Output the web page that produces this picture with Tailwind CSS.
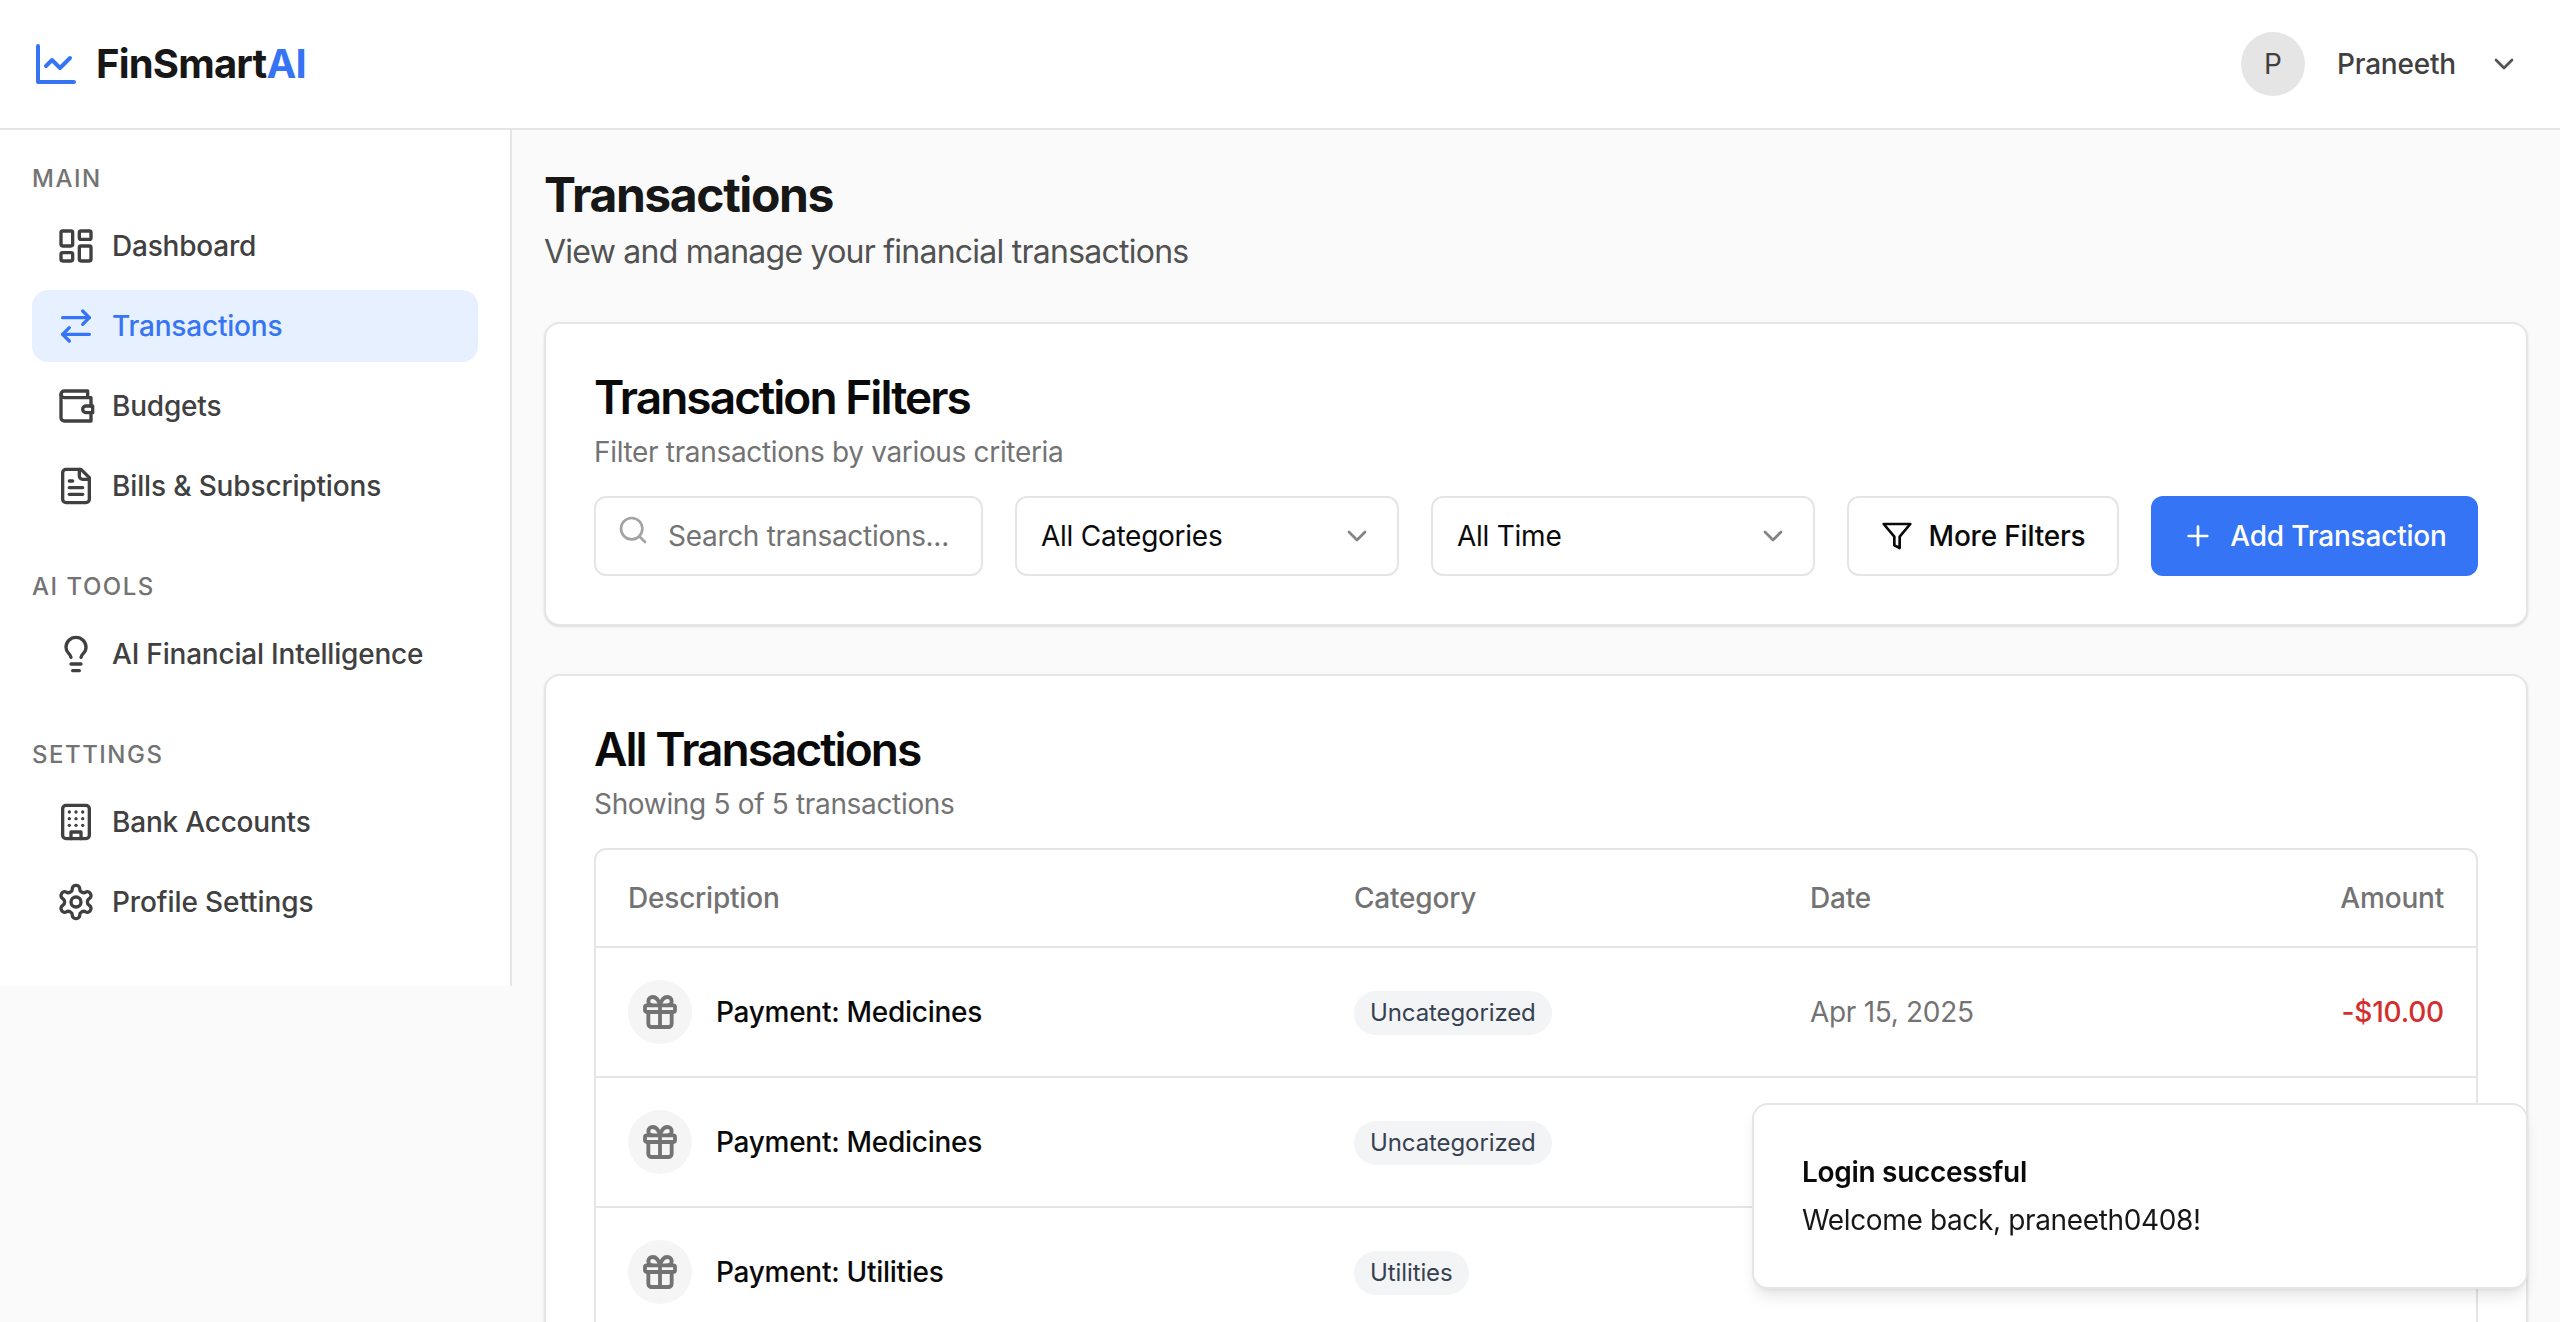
<!DOCTYPE html>
<html lang="en">
<head>
<meta charset="UTF-8">
<title>FinSmartAI - Transactions</title>
<script src="https://cdn.jsdelivr.net/npm/@tailwindcss/browser@4"></script>
</head>
<body class="h-screen overflow-hidden bg-[#fafafa] font-['Inter',sans-serif] text-[#0a0a0a] antialiased">

<!-- Header -->
<header class="h-[130px] bg-white border-b-2 border-[#e5e5e5] flex items-center justify-between pl-8 pr-10">
  <div class="flex items-center gap-4">
    <svg class="w-12 h-12 text-[#3574f5]" viewBox="0 0 24 24" fill="none" stroke="currentColor" stroke-width="2" stroke-linecap="round" stroke-linejoin="round"><path d="M3 3v18h18"/><path d="m19 9-5 5-4-4-3 3"/></svg>
    <span class="text-[40px] leading-[50px] font-bold tracking-[-0.8px] text-[#171717]">FinSmart<span class="text-[#3574f5]">AI</span></span>
  </div>
  <div class="flex items-center">
    <div class="w-16 h-16 rounded-full bg-[#e5e5e5] flex items-center justify-center text-[28px] text-[#404040]">P</div>
    <span class="ml-8 text-[28px] font-[450] tracking-[-0.2px] text-[#404040]">Praneeth</span>
    <svg class="ml-8 w-8 h-8 text-[#525252]" viewBox="0 0 24 24" fill="none" stroke="currentColor" stroke-width="2" stroke-linecap="round" stroke-linejoin="round"><path d="m6 9 6 6 6-6"/></svg>
  </div>
</header>

<div class="flex items-start">
  <!-- Sidebar -->
  <aside class="w-[512px] shrink-0 bg-white border-r-2 border-[#e5e5e5] pl-8 pr-8 pt-8 pb-12">
    <div class="h-8 text-[24px] leading-[34px] font-medium tracking-[1.5px] text-[#737373] mb-4">MAIN</div>
    <nav class="flex flex-col gap-2 mb-12">
      <a class="h-[72px] rounded-2xl pl-6 flex items-center gap-4 text-[28px] font-[450] tracking-[-0.2px] text-[#404040]">
        <svg class="w-10 h-10" viewBox="0 0 24 24" fill="none" stroke="currentColor" stroke-width="2" stroke-linecap="round" stroke-linejoin="round"><rect width="7" height="9" x="3" y="3" rx="1"/><rect width="7" height="5" x="14" y="3" rx="1"/><rect width="7" height="9" x="14" y="12" rx="1"/><rect width="7" height="5" x="3" y="16" rx="1"/></svg>
        Dashboard
      </a>
      <a class="h-[72px] rounded-2xl pl-6 flex items-center gap-4 text-[28px] font-[450] tracking-[-0.2px] bg-[#e6f0fe] text-[#3574f5]">
        <svg class="w-10 h-10" viewBox="0 0 24 24" fill="none" stroke="currentColor" stroke-width="2" stroke-linecap="round" stroke-linejoin="round"><path d="m16 3 4 4-4 4"/><path d="M20 7H4"/><path d="m8 21-4-4 4-4"/><path d="M4 17h16"/></svg>
        Transactions
      </a>
      <a class="h-[72px] rounded-2xl pl-6 flex items-center gap-4 text-[28px] font-[450] tracking-[-0.2px] text-[#404040]">
        <svg class="w-10 h-10" viewBox="0 0 24 24" fill="none" stroke="currentColor" stroke-width="2" stroke-linecap="round" stroke-linejoin="round"><path d="M21 12V7H5a2 2 0 0 1 0-4h14v4"/><path d="M3 5v14a2 2 0 0 0 2 2h16v-5"/><path d="M18 12a2 2 0 0 0 0 4h4v-4Z"/></svg>
        Budgets
      </a>
      <a class="h-[72px] rounded-2xl pl-6 flex items-center gap-4 text-[28px] font-[450] tracking-[-0.15px] text-[#404040]">
        <svg class="w-10 h-10" viewBox="0 0 24 24" fill="none" stroke="currentColor" stroke-width="2" stroke-linecap="round" stroke-linejoin="round"><path d="M15 2H6a2 2 0 0 0-2 2v16a2 2 0 0 0 2 2h12a2 2 0 0 0 2-2V7Z"/><path d="M14 2v4a2 2 0 0 0 2 2h4"/><path d="M10 9H8"/><path d="M16 13H8"/><path d="M16 17H8"/></svg>
        Bills &amp; Subscriptions
      </a>
    </nav>

    <div class="h-8 text-[24px] leading-[34px] font-medium tracking-[1.5px] text-[#737373] mb-4">AI TOOLS</div>
    <nav class="flex flex-col gap-2 mb-12">
      <a class="h-[72px] rounded-2xl pl-6 flex items-center gap-4 text-[28px] font-[450] tracking-[-0.2px] text-[#404040]">
        <svg class="w-10 h-10" viewBox="0 0 24 24" fill="none" stroke="currentColor" stroke-width="2" stroke-linecap="round" stroke-linejoin="round"><path d="M15 14c.2-1 .7-1.7 1.5-2.5 1-.9 1.5-2.2 1.5-3.5A6 6 0 0 0 6 8c0 1 .2 2.2 1.5 3.5.7.7 1.3 1.5 1.5 2.5"/><path d="M9 18h6"/><path d="M10 22h4"/></svg>
        AI Financial Intelligence
      </a>
    </nav>

    <div class="h-8 text-[24px] leading-[34px] font-medium tracking-[1.5px] text-[#737373] mb-4">SETTINGS</div>
    <nav class="flex flex-col gap-2">
      <a class="h-[72px] rounded-2xl pl-6 flex items-center gap-4 text-[28px] font-[450] tracking-[-0.2px] text-[#404040]">
        <svg class="w-10 h-10" viewBox="0 0 24 24" fill="none" stroke="currentColor" stroke-width="2" stroke-linecap="round" stroke-linejoin="round"><rect width="16" height="20" x="4" y="2" rx="2"/><path d="M9 22v-4h6v4"/><path d="M8 6h.01"/><path d="M16 6h.01"/><path d="M12 6h.01"/><path d="M12 10h.01"/><path d="M12 14h.01"/><path d="M16 10h.01"/><path d="M16 14h.01"/><path d="M8 10h.01"/><path d="M8 14h.01"/></svg>
        Bank Accounts
      </a>
      <a class="h-[72px] rounded-2xl pl-6 flex items-center gap-4 text-[28px] font-[450] tracking-[-0.1px] text-[#404040]">
        <svg class="w-10 h-10" viewBox="0 0 24 24" fill="none" stroke="currentColor" stroke-width="2" stroke-linecap="round" stroke-linejoin="round"><path d="M12.22 2h-.44a2 2 0 0 0-2 2v.18a2 2 0 0 1-1 1.73l-.43.25a2 2 0 0 1-2 0l-.15-.08a2 2 0 0 0-2.73.73l-.22.38a2 2 0 0 0 .73 2.73l.15.1a2 2 0 0 1 1 1.72v.51a2 2 0 0 1-1 1.74l-.15.09a2 2 0 0 0-.73 2.73l.22.38a2 2 0 0 0 2.73.73l.15-.08a2 2 0 0 1 2 0l.43.25a2 2 0 0 1 1 1.73V20a2 2 0 0 0 2 2h.44a2 2 0 0 0 2-2v-.18a2 2 0 0 1 1-1.73l.43-.25a2 2 0 0 1 2 0l.15.08a2 2 0 0 0 2.73-.73l.22-.39a2 2 0 0 0-.73-2.73l-.15-.08a2 2 0 0 1-1-1.74v-.5a2 2 0 0 1 1-1.74l.15-.09a2 2 0 0 0 .73-2.73l-.22-.38a2 2 0 0 0-2.73-.73l-.15.08a2 2 0 0 1-2 0l-.43-.25a2 2 0 0 1-1-1.73V4a2 2 0 0 0-2-2z"/><circle cx="12" cy="12" r="3"/></svg>
        Profile Settings
      </a>
    </nav>
  </aside>

  <!-- Main -->
  <main class="flex-1 min-w-0 p-8">
    <h1 class="text-[48px] leading-[66px] font-bold tracking-[-1.4px] text-[#171717]">Transactions</h1>
    <p class="text-[32px] leading-[48px] tracking-[-0.76px] text-[#525252] mb-[46px]">View and manage your financial transactions</p>

    <!-- Filters -->
    <section class="bg-white border-2 border-[#e5e5e5] rounded-2xl shadow-sm p-12 mb-12">
      <h2 class="text-[46px] leading-[50px] font-semibold tracking-[-1.95px] text-[#0a0a0a]">Transaction Filters</h2>
      <p class="text-[28px] leading-10 tracking-[-0.33px] text-[#737373] mt-[10px] mb-6">Filter transactions by various criteria</p>
      <div class="flex items-center gap-8">
        <div class="relative w-[389px] h-20 shrink-0">
          <svg class="absolute left-[23px] top-[18px] w-8 h-8 text-[#a3a3a3]" viewBox="0 0 24 24" fill="none" stroke="currentColor" stroke-width="2" stroke-linecap="round" stroke-linejoin="round"><circle cx="11" cy="11" r="8"/><path d="m21 21-4.3-4.3"/></svg>
          <input class="w-full h-full bg-white border-2 border-[#e5e5e5] rounded-xl pl-[72px] pr-4 text-[28px] tracking-[-0.3px] placeholder:text-[#737373] outline-none" placeholder="Search transactions...">
        </div>
        <div class="w-[384px] h-20 shrink-0 bg-white border-2 border-[#e5e5e5] rounded-xl pl-6 pr-6 flex items-center justify-between text-[28px] tracking-[-0.25px]">
          All Categories
          <svg class="w-8 h-8 opacity-50" viewBox="0 0 24 24" fill="none" stroke="currentColor" stroke-width="2" stroke-linecap="round" stroke-linejoin="round"><path d="m6 9 6 6 6-6"/></svg>
        </div>
        <div class="w-[384px] h-20 shrink-0 bg-white border-2 border-[#e5e5e5] rounded-xl pl-6 pr-6 flex items-center justify-between text-[28px] tracking-[-0.25px]">
          All Time
          <svg class="w-8 h-8 opacity-50" viewBox="0 0 24 24" fill="none" stroke="currentColor" stroke-width="2" stroke-linecap="round" stroke-linejoin="round"><path d="m6 9 6 6 6-6"/></svg>
        </div>
        <button class="w-[272px] h-20 shrink-0 bg-white border-2 border-[#e5e5e5] rounded-xl flex items-center justify-center gap-4 text-[28px] font-[450] tracking-[-0.2px]">
          <svg class="w-8 h-8" viewBox="0 0 24 24" fill="none" stroke="currentColor" stroke-width="2" stroke-linecap="round" stroke-linejoin="round"><polygon points="22 3 2 3 10 12.46 10 19 14 21 14 12.46 22 3"/></svg>
          More Filters
        </button>
        <button class="flex-1 h-20 bg-[#3574f5] rounded-xl flex items-center justify-center gap-4 text-[28px] font-[450] tracking-[-0.2px] text-white">
          <svg class="w-8 h-8" viewBox="0 0 24 24" fill="none" stroke="currentColor" stroke-width="2" stroke-linecap="round" stroke-linejoin="round"><path d="M5 12h14"/><path d="M12 5v14"/></svg>
          Add Transaction
        </button>
      </div>
    </section>

    <!-- Transactions table -->
    <section class="bg-white border-2 border-[#e5e5e5] rounded-2xl shadow-sm p-12">
      <h2 class="text-[46px] leading-[50px] font-semibold tracking-[-1.95px] text-[#0a0a0a]">All Transactions</h2>
      <p class="text-[28px] leading-10 tracking-[-0.33px] text-[#737373] mt-[10px] mb-6">Showing 5 of 5 transactions</p>
      <div class="border-2 border-[#e5e5e5] rounded-xl overflow-hidden">
        <table class="w-full table-fixed text-[28px] tracking-[-0.2px]">
          <thead>
            <tr class="h-[97px] border-b-2 border-[#e5e5e5] text-[#737373]">
              <th class="w-[726px] px-8 text-left font-[450]">Description</th>
              <th class="w-[456px] px-8 text-left font-[450]">Category</th>
              <th class="w-[300px] px-8 text-left font-[450]">Date</th>
              <th class="px-8 text-right font-[450]">Amount</th>
            </tr>
          </thead>
          <tbody>
            <tr class="h-[130px] border-b-2 border-[#e5e5e5]">
              <td class="px-8">
                <div class="flex items-center gap-6 font-[450] tracking-[-0.28px]">
                  <div class="w-16 h-16 rounded-full bg-[#f5f5f5] flex items-center justify-center text-[#737373]">
                    <svg class="w-10 h-10" viewBox="0 0 24 24" fill="none" stroke="currentColor" stroke-width="2.3" stroke-linecap="round" stroke-linejoin="round"><rect x="3" y="8" width="18" height="4" rx="1"/><path d="M12 8v13"/><path d="M19 12v7a2 2 0 0 1-2 2H7a2 2 0 0 1-2-2v-7"/><path d="M7.5 8a2.5 2.5 0 0 1 0-5A4.8 8 0 0 1 12 8a4.8 8 0 0 1 4.5-5 2.5 2.5 0 0 1 0 5"/></svg>
                  </div>
                  Payment: Medicines
                </div>
              </td>
              <td class="px-8"><span class="inline-flex items-center h-11 px-4 rounded-full bg-[#f3f4f6] text-[24px] tracking-[-0.1px] text-[#374151]">Uncategorized</span></td>
              <td class="px-8 text-[#737373] tracking-[-0.3px]">Apr 15, 2025</td>
              <td class="px-8 text-right font-[450] text-[#d32f2f]">-$10.00</td>
            </tr>
            <tr class="h-[130px] border-b-2 border-[#e5e5e5]">
              <td class="px-8">
                <div class="flex items-center gap-6 font-[450] tracking-[-0.28px]">
                  <div class="w-16 h-16 rounded-full bg-[#f5f5f5] flex items-center justify-center text-[#737373]">
                    <svg class="w-10 h-10" viewBox="0 0 24 24" fill="none" stroke="currentColor" stroke-width="2.3" stroke-linecap="round" stroke-linejoin="round"><rect x="3" y="8" width="18" height="4" rx="1"/><path d="M12 8v13"/><path d="M19 12v7a2 2 0 0 1-2 2H7a2 2 0 0 1-2-2v-7"/><path d="M7.5 8a2.5 2.5 0 0 1 0-5A4.8 8 0 0 1 12 8a4.8 8 0 0 1 4.5-5 2.5 2.5 0 0 1 0 5"/></svg>
                  </div>
                  Payment: Medicines
                </div>
              </td>
              <td class="px-8"><span class="inline-flex items-center h-11 px-4 rounded-full bg-[#f3f4f6] text-[24px] tracking-[-0.1px] text-[#374151]">Uncategorized</span></td>
              <td class="px-8"></td>
              <td class="px-8"></td>
            </tr>
            <tr class="h-[130px] border-b-2 border-[#e5e5e5]">
              <td class="px-8">
                <div class="flex items-center gap-6 font-[450] tracking-[-0.28px]">
                  <div class="w-16 h-16 rounded-full bg-[#f5f5f5] flex items-center justify-center text-[#737373]">
                    <svg class="w-10 h-10" viewBox="0 0 24 24" fill="none" stroke="currentColor" stroke-width="2.3" stroke-linecap="round" stroke-linejoin="round"><rect x="3" y="8" width="18" height="4" rx="1"/><path d="M12 8v13"/><path d="M19 12v7a2 2 0 0 1-2 2H7a2 2 0 0 1-2-2v-7"/><path d="M7.5 8a2.5 2.5 0 0 1 0-5A4.8 8 0 0 1 12 8a4.8 8 0 0 1 4.5-5 2.5 2.5 0 0 1 0 5"/></svg>
                  </div>
                  Payment: Utilities
                </div>
              </td>
              <td class="px-8"><span class="inline-flex items-center h-11 px-4 rounded-full bg-[#f3f4f6] text-[24px] tracking-[-0.1px] text-[#374151]">Utilities</span></td>
              <td class="px-8"></td>
              <td class="px-8"></td>
            </tr>
          </tbody>
        </table>
      </div>
    </section>
  </main>
</div>

<!-- Toast -->
<div class="fixed right-8 bottom-[33px] w-[776px] h-[186px] bg-white border-2 border-[#e5e5e5] rounded-2xl shadow-lg px-12 flex flex-col justify-center gap-2">
  <div class="text-[28px] leading-10 font-semibold tracking-[-0.3px]">Login successful</div>
  <div class="text-[28px] leading-10 tracking-[-0.36px] text-[#171717]">Welcome back, praneeth0408!</div>
</div>
</body>
</html>
